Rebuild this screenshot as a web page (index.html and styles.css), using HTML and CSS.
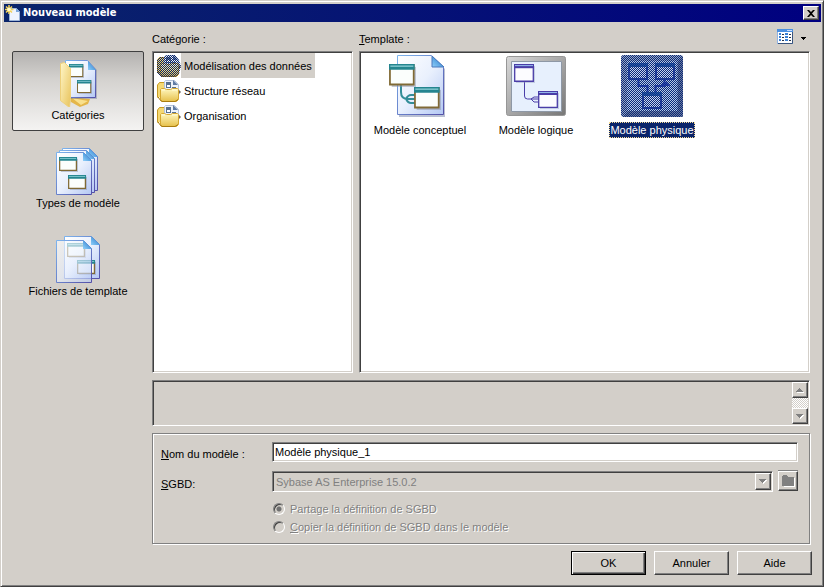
FILE: index.html
```html
<!DOCTYPE html>
<html lang="fr">
<head>
<meta charset="utf-8">
<title>Nouveau modèle</title>
<link rel="stylesheet" href="styles.css">
</head>
<body>
<svg class="defs" aria-hidden="true">
  <defs>
    <linearGradient id="page" x1="0" y1="0" x2="1" y2="1">
      <stop offset="0" stop-color="#ffffff"/><stop offset=".5" stop-color="#e9f0fd"/><stop offset="1" stop-color="#b4c8f4"/>
    </linearGradient>
    <linearGradient id="edge" x1="0" y1="0" x2="1" y2="1">
      <stop offset="0" stop-color="#7db4ee"/><stop offset="1" stop-color="#5450a8"/>
    </linearGradient>
    <linearGradient id="fold" x1="0" y1="1" x2="1" y2="0">
      <stop offset="0" stop-color="#8fd0fa"/><stop offset="1" stop-color="#1b6fc4"/>
    </linearGradient>
    <linearGradient id="yellow" x1="0" y1="0" x2="1" y2="1">
      <stop offset="0" stop-color="#fff6c8"/><stop offset="1" stop-color="#e8c35c"/>
    </linearGradient>
    <linearGradient id="gold" x1="0" y1="0" x2="0" y2="1">
      <stop offset="0" stop-color="#fff8c0"/><stop offset="1" stop-color="#e6c04a"/>
    </linearGradient>
    <linearGradient id="metal" x1="0" y1="0" x2="1" y2="1">
      <stop offset="0" stop-color="#d8d8d8"/><stop offset="1" stop-color="#777777"/>
    </linearGradient>
    <pattern id="dither" width="2" height="2" patternUnits="userSpaceOnUse">
      <path d="M0 0h1v1H0zM1 1h1v1H1z" fill="#0a246a" shape-rendering="crispEdges"/>
    </pattern>
    <pattern id="dither-blue" width="2" height="2" patternUnits="userSpaceOnUse">
      <path d="M0 0h1v1H0zM1 1h1v1H1z" fill="#0a2a78" shape-rendering="crispEdges"/>
    </pattern>
    <symbol id="win" viewBox="0 0 20 16" preserveAspectRatio="none">
      <path d="M2 2h18v14H2z" fill="#8b93a8" opacity=".5"/>
      <path d="M.7.7h17.6v13.6H.7z" fill="#fbfefc" stroke="#806a35" stroke-width="1.3"/>
      <path d="M0 0h19v4H0z" fill="#24858f"/><path d="M1 1h17v1H1z" fill="#84c8d0"/>
    </symbol>
    <symbol id="winv" viewBox="0 0 21 18" preserveAspectRatio="none">
      <path d="M2 2h19v16H2z" fill="#8b93b8" opacity=".4"/>
      <path d="M.7.7h18.6v15.6H.7z" fill="#fcfcff" stroke="#4a3da8" stroke-width="1.3"/>
      <path d="M0 0h20v4H0z" fill="#4a3da8"/><path d="M1 1h18v1H1z" fill="#93b6ea"/>
    </symbol>
    <symbol id="cat" viewBox="0 0 24 24">
      <path d="M.5 6l2-2.500H8v5h-4L1.500 19 .5 18z" fill="#f4d873" stroke="#c79a22"/>
      <path d="M1 6h6v12H1z" fill="#f4d873"/>
      <path d="M7.500 12V2.500l1-1h9l4 4V12z" fill="#eef3fb" stroke="#b4c2da"/>
      <path d="M9 3h5v6H9z" fill="#58708f"/><path d="M10 6h3v2h-3z" fill="#fff"/><path d="M16 1v5h5z" fill="#5f7ba4"/><path d="M15 8h4v1h-4z" fill="#58708f"/>
      <path d="M3.500 10.500l1-1h3l2 1h4l2-1h5l1 1v10l-2 2h-14l-2-2z" fill="url(#gold)" stroke="#d5a730"/>
      <path d="M5 11h3M15 11h5" stroke="#fffbd8"/><path d="M1 18l3 4 1 .5h13l3-2" fill="none" stroke="#a97c10"/><path d="M.5 6v12" stroke="#c79a22"/>
      <path d="M22 11l2 2-2 2z" fill="#6c6455"/>
    </symbol>
  </defs>
</svg>

<form class="window">
  <header class="titlebar">
    <svg class="app-icon" width="16" height="16" viewBox="0 0 16 16" aria-hidden="true">
      <path d="M4.500 3.500h7l3 3v9h-10z" fill="#eef4ff" stroke="#9cb4d8"/><path d="M11 3v4h4z" fill="#7aa6dc"/>
      <path d="M4 0v9M0 4.500h8.500M1 1.500l6 6M7 1.500l-6 6" stroke="#f3d35b" stroke-width="1.500"/><circle cx="4" cy="4.500" r="1.800" fill="#fffbd0"/>
    </svg>
    <h1>Nouveau modèle</h1>
    <button type="button" class="close" aria-label="Fermer">
      <svg width="8" height="7" viewBox="0 0 8 7" aria-hidden="true"><path d="M0 0h2l2 2 2-2h2L5 3.500 8 7H6L4 5 2 7H0l3-3.500z"/></svg>
    </button>
  </header>

  <div class="content">
    <nav class="sidebar">
      <button type="button" class="side active">
        <svg width="48" height="48" viewBox="0 0 48 48" aria-hidden="true">
          <path d="M16 38l20 2-2 5-8 3-9-5z" fill="#e4b64a"/><path d="M18 39l16 3-7 4z" fill="#f9e08d"/>
          <path d="M13 3h22l8 8v29H13z" fill="#687394" opacity=".4"/>
          <path d="M11.500 1.500h22l8 9v28h-30z" fill="url(#page)" stroke="url(#edge)"/>
          <path d="M34 2v9h8z" fill="url(#fold)"/>
          <use href="#win" x="15" y="5" width="15" height="14"/><use href="#win" x="23" y="21" width="15" height="14"/>
          <path d="M6.500 4.500l4-1 6 6v30l-1 9-9-7z" fill="url(#yellow)" stroke="#edcf7b"/>
        </svg>
        <span>Catégories</span>
      </button>
      <button type="button" class="side">
        <svg width="48" height="48" viewBox="0 0 48 48" aria-hidden="true">
          <path d="M8.500 1.500h27l8 8v34h-35z" fill="url(#page)" stroke="url(#edge)"/><path d="M35 1v9h9z" fill="url(#fold)"/>
          <path d="M5.500 3.500h27l8 8v34h-35z" fill="url(#page)" stroke="url(#edge)"/><path d="M32 3v9h9z" fill="url(#fold)"/>
          <path d="M2.500 5.500h27l8 8v34h-35z" fill="url(#page)" stroke="url(#edge)"/><path d="M29 5v9h9z" fill="url(#fold)"/>
          <use href="#win" x="5" y="10" width="19" height="15"/><use href="#win" x="14" y="28" width="19" height="15"/>
        </svg>
        <span>Types de modèle</span>
      </button>
      <button type="button" class="side">
        <svg width="48" height="48" viewBox="0 0 48 48" aria-hidden="true">
          <path d="M10.500 1.500h27l8 8v34h-35z" fill="url(#page)" stroke="url(#edge)"/><path d="M37 1v9h9z" fill="url(#fold)"/>
          <use href="#win" x="13" y="8" width="19" height="15"/><use href="#win" x="23" y="25" width="19" height="15"/>
          <path d="M2.500 5.500h27l8 8v34h-35z" fill="url(#page)" opacity=".65"/>
          <path d="M2.500 5.500h27l8 8v34h-35z" fill="none" stroke="url(#edge)"/><path d="M29 5v9h9z" fill="url(#fold)"/>
        </svg>
        <span>Fichiers de template</span>
      </button>
    </nav>

    <main class="main">
      <div class="lists">
        <section class="column categories">
          <div class="head"><span>Catégorie :</span></div>
          <ul class="sunken">
            <li class="selected">
              <svg width="24" height="24" viewBox="0 0 24 24" aria-hidden="true">
                <use href="#cat"/>
                <path d="M0 6l3-3h4l3-2h8l4 5 2 6-2 8-4 3H4l-4-4z" fill="url(#dither)"/>
              </svg><span>Modélisation des données</span></li>
            <li><svg width="24" height="24" aria-hidden="true"><use href="#cat"/></svg><span>Structure réseau</span></li>
            <li><svg width="24" height="24" aria-hidden="true"><use href="#cat"/></svg><span>Organisation</span></li>
          </ul>
        </section>

        <section class="column templates">
          <div class="head"><span><u>T</u>emplate :</span>
            <button type="button" class="view" aria-label="Affichage">
              <svg width="30" height="16" viewBox="0 0 30 16" aria-hidden="true">
                <path d="M0 0h16v15H0z" fill="#8fb3e3"/><path d="M1 14.500h14.500V1" fill="none" stroke="#39557f"/>
                <path d="M1 3h14v11H1z" fill="#fff"/><path d="M0 0h16v3H0z" fill="#4a8fe0"/><path d="M10 1h5v1h-5z" fill="#c5ddff"/>
                <path d="M2 4h2v2H2zM8 4h3v2H8zM2 7h2v2H2zM8 7h3v2H8zM2 10h2v2H2zM8 10h3v2H8z" fill="#3c82d6"/>
                <path d="M5 5.500h2M12 5.500h2M5 8.500h2M12 8.500h2M5 11.500h2M12 11.500h2" stroke="#26344c"/>
                <path d="M24 8h5v1h-1v1h-1v1h-1v-1h-1V9h-1z" fill="#000"/>
              </svg>
            </button>
          </div>
          <ul class="sunken tiles">
            <li>
              <svg width="64" height="64" viewBox="0 0 64 64" aria-hidden="true">
                <path d="M11 4h34l12 12v48H11z" fill="#7682a8" opacity=".5"/>
                <path d="M9.500 2.500h34l12 12v47h-46z" fill="url(#page)" stroke="url(#edge)"/><path d="M44 3v11h12z" fill="url(#fold)" stroke="#4b78bc"/>
                <path d="M13 30v9q0 7 7 7h8M27 42h-4q-3 0-5 4 2 4 5 4h4" fill="none" stroke="#328d98" stroke-width="2"/>
                <use href="#win" x="1" y="11" width="27" height="23"/><use href="#win" x="26" y="34" width="27" height="23"/>
              </svg><span>Modèle conceptuel</span></li>
            <li>
              <svg width="64" height="64" viewBox="0 0 64 64" aria-hidden="true">
                <rect x="2.500" y="3.500" width="59" height="59" rx="2" fill="url(#metal)" stroke="#969696"/>
                <path d="M7.500 8.500h50v50h-50z" fill="#e7f0fd" stroke="#8e98a6"/>
                <path d="M20.500 28v15q0 3 3 3H34M34 44h-4l-3 2 3 3h4" fill="none" stroke="#4a3da8"/>
                <use href="#winv" x="10" y="11" width="21" height="19"/><use href="#winv" x="34" y="38" width="21" height="18"/>
              </svg><span>Modèle logique</span></li>
            <li class="selected">
              <svg width="64" height="64" viewBox="0 0 64 64" aria-hidden="true">
                <rect x="1" y="2" width="62" height="62" rx="3" fill="#98a6c4"/>
                <path d="M58 8l5-5v61H3l5-6h50z" fill="#6f7c9e"/>
                <path d="M7 8h50v50H7z" fill="#b4c8e8"/>
                <path d="M18.500 27v6h9v6M44.500 27v6h-9v6M42 32l3-3 3 3z" fill="none" stroke="#3048c0" stroke-width="2"/>
                <path d="M9 12h18v14H9zM36 12h18v14H36zM23 41h18v14H23z" fill="#c8d2f0" stroke="#3048b0" stroke-width="2"/>
                <path d="M8 10h20v4H8zM35 10h20v4H35zM22 39h20v4H22z" fill="#2a60b0"/>
                <rect x="1" y="2" width="62" height="62" rx="3" fill="url(#dither-blue)"/>
              </svg><span>Modèle physique</span></li>
          </ul>
        </section>
      </div>

      <div class="sunken description">
        <div class="scroll">
          <button type="button" disabled aria-label="Haut"><svg width="8" height="5" viewBox="0 0 8 5" aria-hidden="true"><path d="M1 4h7v1H1z" fill="#fff"/><path d="M0 4h7v-1H6V2H5V1H4V0H3v1H2v1H1v1H0z" fill="#808080"/></svg></button>
          <button type="button" disabled aria-label="Bas"><svg width="8" height="5" viewBox="0 0 8 5" aria-hidden="true"><path d="M1 1h7v1H7v1H6v1H5v1H4V4z" fill="#fff"/><path d="M0 0h7v1H6v1H5v1H4v1H3V3H2V2H1V1H0z" fill="#808080"/></svg></button>
        </div>
      </div>

      <div class="group">
        <label for="name"><u>N</u>om du modèle :</label>
        <input id="name" class="sunken field" type="text" value="Modèle physique_1">
        <label for="dbms"><u>S</u>GBD:</label>
        <div class="dbms-row">
          <div class="combo">
            <select id="dbms" class="sunken field" disabled><option>Sybase AS Enterprise 15.0.2</option></select>
            <span class="drop"><svg width="8" height="5" viewBox="0 0 8 5" aria-hidden="true"><path d="M1 1h7v1H7v1H6v1H5v1H4V4z" fill="#fff"/><path d="M0 0h7v1H6v1H5v1H4v1H3V3H2V2H1V1H0z" fill="#808080"/></svg></span>
          </div>
          <button type="button" class="browse" disabled aria-label="Parcourir">
            <svg width="13" height="12" viewBox="0 0 13 12" aria-hidden="true"><path d="M2 3h11v9H2z" fill="#fff"/><path d="M0 1h1V0h4v1h1v1h6v9H0z" fill="#808080"/></svg>
          </button>
        </div>
        <div class="radios">
          <label><input type="radio" name="mode" checked disabled><span>Partage la définition de SGBD</span></label>
          <label><input type="radio" name="mode" disabled><span><u>C</u>opier la définition de SGBD dans le modèle</span></label>
        </div>
      </div>
    </main>
  </div>

  <footer class="actions">
    <button type="submit" class="default">OK</button>
    <button type="button">Annuler</button>
    <button type="button">Aide</button>
  </footer>
</form>
</body>
</html>
```

FILE: styles.css
```css
:root {
  --face: #d3cfc9;
  --shadow: #808080;
  --dark: #404040;
  --select: #0a246a;
}

* { box-sizing: border-box; }

body {
  margin: 0;
  font: 11px/16px "Liberation Sans", Arial, sans-serif;
  color: #000;
}

button, input, select { font: inherit; color: inherit; margin: 0; }
ul { list-style: none; margin: 0; padding: 0; }
svg { display: block; flex: none; }
.defs { position: absolute; width: 0; height: 0; }

.window {
  display: flex;
  flex-direction: column;
  min-height: 100vh;
  padding: 3px 2px 11px 3px;
  background: var(--face);
  border: 1px solid;
  border-color: var(--face) var(--dark) var(--dark) var(--face);
  box-shadow: inset 1px 1px #fff, inset -1px -1px var(--shadow);
}

.titlebar {
  display: flex;
  align-items: center;
  gap: 2px;
  height: 18px;
  padding: 0 2px 0 1px;
  background: linear-gradient(90deg, #0a246a, #000080);
}

.titlebar h1 {
  flex: 1;
  margin: 0;
  font: bold 11px/18px "DejaVu Sans Condensed", "DejaVu Sans", sans-serif;
  color: #fff;
}

.close, .scroll button, .drop, .browse, .actions button {
  display: flex;
  align-items: center;
  justify-content: center;
  padding: 0;
  background: var(--face);
  border: 1px solid;
  border-color: #fff var(--dark) var(--dark) #fff;
  box-shadow: inset -1px -1px var(--shadow);
}

.close { width: 16px; height: 14px; }

.content { flex: 1; display: flex; gap: 8px; padding: 7px 11px 0 8px; }

.sidebar { display: flex; flex-direction: column; gap: 8px; width: 132px; padding-top: 22px; }

.side {
  display: flex;
  flex-direction: column;
  align-items: center;
  height: 80px;
  padding: 7px 0 0;
  background: none;
  border: 1px solid transparent;
  border-radius: 2px;
}

.side.active {
  border-color: #404040;
  background: linear-gradient(#b4b2b0, #d4d2cf 35%, #f4f3f2);
}

.main { flex: 1; min-width: 0; display: flex; flex-direction: column; gap: 7px; }
.lists { flex: 1; display: flex; gap: 6px; }
.column { display: flex; flex-direction: column; }
.categories { width: 201px; }
.templates { flex: 1; }
.head { display: flex; justify-content: space-between; height: 22px; }
.head span { padding-top: 2px; }
.view { height: 16px; padding: 0 3px 0 0; background: none; border: 0; }

.sunken {
  background: #fff;
  border: 1px solid;
  border-color: var(--shadow) #fff #fff var(--shadow);
  box-shadow: inset 1px 1px var(--dark), inset -1px -1px var(--face);
}

.column ul { flex: 1; padding: 1px 4px; }
.categories li { display: flex; align-items: center; height: 25px; }
.categories li span { padding: 5px 3px 4px 3px; }
.categories .selected span { background: var(--face); }

.column .tiles { display: flex; padding: 1px 2px; }
.tiles li { display: flex; flex-direction: column; align-items: center; gap: 5px; width: 116px; }
.tiles span { border: 1px solid transparent; line-height: 14px; }
.tiles .selected span { background: var(--select); color: #fff; border: 1px dotted #f5db95; }

.description { display: flex; justify-content: flex-end; height: 46px; padding: 1px; background: var(--face); }

.scroll {
  display: flex;
  flex-direction: column;
  justify-content: space-between;
  background: repeating-conic-gradient(#fff 0 25%, var(--face) 0 50%) 0 0 / 2px 2px;
}

.scroll button { width: 16px; height: 16px; }

.group {
  display: grid;
  grid-template-columns: 111px 1fr;
  align-items: center;
  row-gap: 9px;
  padding: 8px 11px 8px 8px;
  border: 1px solid var(--shadow);
  box-shadow: inset 1px 1px #fff, 1px 1px #fff;
}

.group > label { padding-top: 4px; }
.field { width: 100%; height: 20px; border-radius: 0; padding: 0 2px; outline: 0; }
.dbms-row { display: flex; gap: 5px; }
.combo { position: relative; flex: 1; }
.combo select { appearance: none; display: block; height: 21px; padding: 0 3px; background: var(--face); color: var(--shadow); opacity: 1; }
.drop { position: absolute; top: 2px; right: 2px; width: 16px; height: 17px; pointer-events: none; }
.browse { width: 20px; height: 20px; box-shadow: inset -1px -1px var(--shadow), 0 -1px var(--shadow); }

.radios { grid-column: 2; display: flex; flex-direction: column; gap: 2px; color: var(--shadow); text-shadow: 1px 1px #fff; }
.radios label { display: flex; align-items: center; gap: 5px; padding-left: 1px; }

.radios input {
  appearance: none;
  width: 12px;
  height: 12px;
  border: 1px solid;
  border-color: var(--shadow) #fff #fff var(--shadow);
  border-radius: 50%;
  box-shadow: inset 1px 1px var(--dark);
}

.radios input:checked { background: radial-gradient(circle, #707070 2px, transparent 3px); }

.actions { display: flex; justify-content: flex-end; gap: 8px; padding: 7px 9px 0 0; }
.actions button { width: 75px; height: 24px; }
.actions .default { border-color: #000; box-shadow: inset 1px 1px #fff, inset -1px -1px var(--dark), inset -2px -2px var(--shadow); }
```
